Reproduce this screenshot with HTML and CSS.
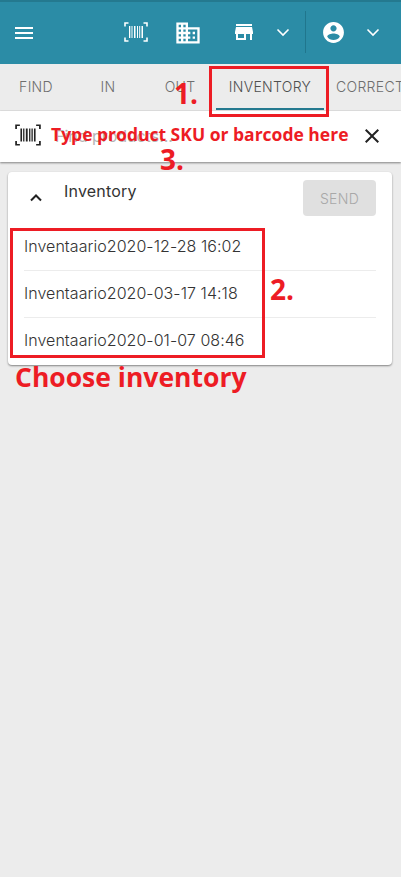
FILE: index.html
```html
<!DOCTYPE html>
<html lang="en">
<head>
  <meta charset="UTF-8" />
  <meta name="viewport" content="width=device-width, initial-scale=1.0" />
  <title>Inventory</title>
  <link rel="stylesheet" href="styles.css">
</head>
<body>
  <header class="topbar">
    <svg class="icon menu-icon" viewBox="0 0 24 24"><path d="M3 18h18v-2H3v2zm0-5h18v-2H3v2zm0-7v2h18V6H3z"/></svg>
    <svg class="icon scan-icon" viewBox="0 0 24 24"><path class="line" d="M1 6.500V3h3.500M19.500 3H23v3.500M1 17.500V21h3.500M19.500 21H23v-3.500"/><path d="M5 6h1.300v12H5zM7.500 6h1v12h-1zM10 6h1.500v12H10zM13 6h1v12h-1zM15.200 6h1v12h-1zM17.500 6h1.500v12h-1.500z"/></svg>
    <svg class="icon domain-icon" viewBox="0 0 24 24"><path d="M12 7V3H2v18h20V7H12zM6 19H4v-2h2v2zm0-4H4v-2h2v2zm0-4H4V9h2v2zm0-4H4V5h2v2zm4 12H8v-2h2v2zm0-4H8v-2h2v2zm0-4H8V9h2v2zm0-4H8V5h2v2zm10 12h-8v-2h2v-2h-2v-2h2v-2h-2V9h8v10zm-2-8h-2v2h2v-2zm0 4h-2v2h2v-2z"/></svg>
    <svg class="icon store-icon" viewBox="0 0 24 24"><path d="M20 4H4v2h16V4zm1 10v-2l-1-5H4l-1 5v2h1v6h10v-6h4v6h2v-6h1zm-9 4H6v-4h6v4z"/></svg>
    <svg class="icon chev store-chev" viewBox="0 0 24 24"><path class="line" d="M6.500 9.500l5.500 5.500 5.500-5.500"/></svg>
    <span class="divider"></span>
    <svg class="icon user-icon" viewBox="0 0 24 24"><path d="M12 2C6.480 2 2 6.480 2 12s4.480 10 10 10 10-4.480 10-10S17.520 2 12 2zm0 3c1.660 0 3 1.340 3 3s-1.340 3-3 3-3-1.340-3-3 1.340-3 3-3zm0 14.200c-2.500 0-4.710-1.280-6-3.220.030-1.990 4-3.080 6-3.080 1.990 0 5.970 1.090 6 3.080-1.290 1.940-3.500 3.220-6 3.220z"/></svg>
    <svg class="icon chev user-chev" viewBox="0 0 24 24"><path class="line" d="M6.500 9.500l5.500 5.500 5.500-5.500"/></svg>
  </header>

  <nav class="tabs">
    <div class="tab">FIND</div>
    <div class="tab">IN</div>
    <div class="tab">OUT</div>
    <div class="tab tab-active">INVENTORY</div>
    <div class="tab tab-last">CORRECTION</div>
  </nav>

  <div class="search">
    <svg class="search-scan" viewBox="0 0 24 24"><path class="line" d="M1 6.500V3h3.500M19.500 3H23v3.500M1 17.500V21h3.500M19.500 21H23v-3.500"/><path d="M5 6h1.500v12H5zM7.500 6h1.200v12H7.500zM10 6h1.700v12H10zM13 6h1.200v12H13zM15.200 6h1.200v12h-1.200zM17.500 6h1.500v12h-1.500z"/></svg>
    <span class="placeholder">Find products...</span>
    <svg class="search-close" viewBox="0 0 24 24"><path d="M19 6.410L17.590 5 12 10.590 6.410 5 5 6.410 10.590 12 5 17.590 6.410 19 12 13.410 17.590 19 19 17.590 13.410 12z"/></svg>
  </div>

  <section class="card">
    <div class="card-head">
      <svg class="card-chev" viewBox="0 0 24 24"><path class="line" d="M7 14.500l5-5 5 5"/></svg>
      <span class="card-title">Inventory</span>
      <button class="btn-send" disabled>SEND</button>
    </div>
    <ul class="inv-list">
      <li class="inv-item">Inventaario2020-12-28 16:02</li>
      <li class="inv-item">Inventaario2020-03-17 14:18</li>
      <li class="inv-item">Inventaario2020-01-07 08:46</li>
    </ul>
  </section>

  <!-- red notes painted over the screenshot -->
  <div class="note-box box-tab"></div>
  <div class="note-box box-list"></div>
  <div class="note num-1">1.</div>
  <div class="note num-2">2.</div>
  <div class="note num-3">3.</div>
  <div class="note note-type">Type product SKU or barcode here</div>
  <div class="note note-choose">Choose inventory</div>
</body>
</html>
```

FILE: styles.css
```css
* {
  box-sizing: border-box;
}
html, body {
  height: 100%;
}
body {
  font-family: Inter, 'Open Sans', sans-serif;
  background-color: #ececec;
  margin: 0;
  color: #333;
  overflow: hidden;
  position: relative;
}
svg {
  display: block;
  flex: none;
}
.line {
  fill: none;
  stroke: currentColor;
  stroke-width: 1.6;
}
.topbar {
  height: 64px;
  background: #2b8ca6;
  border-top: 2px solid #24798f;
  display: flex;
  align-items: center;
  padding: 0 0 2px 12px;
  color: #fff;
}
.icon {
  width: 24px;
  height: 24px;
  fill: #fff;
  color: #fff;
}
.menu-icon {
  position: relative;
  top: 1px;
}
.scan-icon {
  margin-left: 88px;
  stroke-width: 1;
}
.domain-icon {
  margin-left: 26px;
  width: 28px;
  height: 28px;
  position: relative;
  top: 1px;
}
.store-icon {
  margin-left: 30px;
}
.store-chev {
  margin-left: 15px;
  width: 24px;
}
.divider {
  width: 1px;
  height: 42px;
  background: #20768d;
  margin-left: 10px;
}
.user-icon {
  margin-left: 15px;
  width: 25px;
  height: 25px;
}
.user-chev {
  margin-left: 15px;
}
.tabs {
  height: 47px;
  display: flex;
  border-bottom: 1px solid #e2e2e2;
  font-size: 14px;
  font-weight: 300;
  color: #6e6e6e;
  letter-spacing: 0.3px;
  white-space: nowrap;
  overflow: hidden;
}
.tab {
  width: 72px;
  flex: none;
  text-align: center;
  line-height: 45px;
  height: 46px;
}
.tab-active {
  width: 108px;
  color: #4f4f4f;
  border-bottom: 2px solid #24798f;
}
.tab-last {
  width: auto;
  padding-left: 12px;
  text-align: left;
}
.search {
  height: 51px;
  background: #fff;
  display: flex;
  align-items: center;
  padding: 0 16px;
  box-shadow: 0 1px 2px rgba(0,0,0,0.45);
  position: relative;
}
.search-scan {
  width: 26px;
  height: 26px;
  color: #222;
  fill: #222;
  position: relative;
  top: -2px;
  left: -1px;
}
.placeholder {
  font-size: 16px;
  color: #b5b5b5;
  margin-left: 13px;
  flex: 1;
  position: relative;
  top: -1px;
}
.search-close {
  width: 24px;
  height: 24px;
  fill: #222;
  margin-right: 1px;
  position: relative;
  top: -1px;
}
.card {
  margin: 10px 9px 0 8px;
  background: #fff;
  border-radius: 4px;
  height: 193px;
  box-shadow: 0 1px 2px rgba(0,0,0,0.45);
}
.card-head {
  height: 52px;
  display: flex;
  align-items: flex-start;
  padding: 8px 16px 0 16px;
}
.card-chev {
  width: 24px;
  height: 24px;
  color: #222;
  margin-top: 6px;
}
.card-chev .line {
  stroke-width: 2;
}
.card-title {
  font-size: 16px;
  letter-spacing: 0.2px;
  color: #333;
  margin-left: 16px;
  flex: 1;
  line-height: 23px;
}
.btn-send {
  width: 73px;
  height: 36px;
  background: #e0e0e0;
  border: none;
  border-radius: 4px;
  color: #a8a8a8;
  font-family: inherit;
  font-size: 14px;
  font-weight: 300;
  letter-spacing: 0.3px;
}
.inv-list {
  list-style: none;
  margin: 0;
  padding: 0 16px;
}
.inv-item {
  height: 47px;
  line-height: 44px;
  font-size: 16px;
  font-weight: 300;
  letter-spacing: 0.05px;
  color: #333;
  border-bottom: 1px solid #ececec;
}
.inv-item:last-child {
  border-bottom: none;
}
.note-box {
  position: absolute;
  border: 3px solid #ed1c24;
}
.box-tab {
  left: 209px;
  top: 66px;
  width: 120px;
  height: 51px;
}
.box-list {
  left: 10px;
  top: 228px;
  width: 255px;
  height: 130px;
}
.note {
  position: absolute;
  color: #ed1c24;
  font-family: 'Open Sans', sans-serif;
  font-weight: 700;
  white-space: nowrap;
}
.num-1 {
  left: 174px;
  top: 74px;
  font-size: 28px;
  line-height: 38px;
}
.num-2 {
  left: 270px;
  top: 270px;
  font-size: 28px;
  line-height: 38px;
}
.num-3 {
  left: 160px;
  top: 140px;
  font-size: 28px;
  line-height: 38px;
}
.note-type {
  left: 51px;
  top: 121px;
  font-size: 17.500px;
  line-height: 26px;
}
.note-choose {
  left: 15px;
  top: 359px;
  font-size: 26.500px;
  line-height: 36px;
}
```
